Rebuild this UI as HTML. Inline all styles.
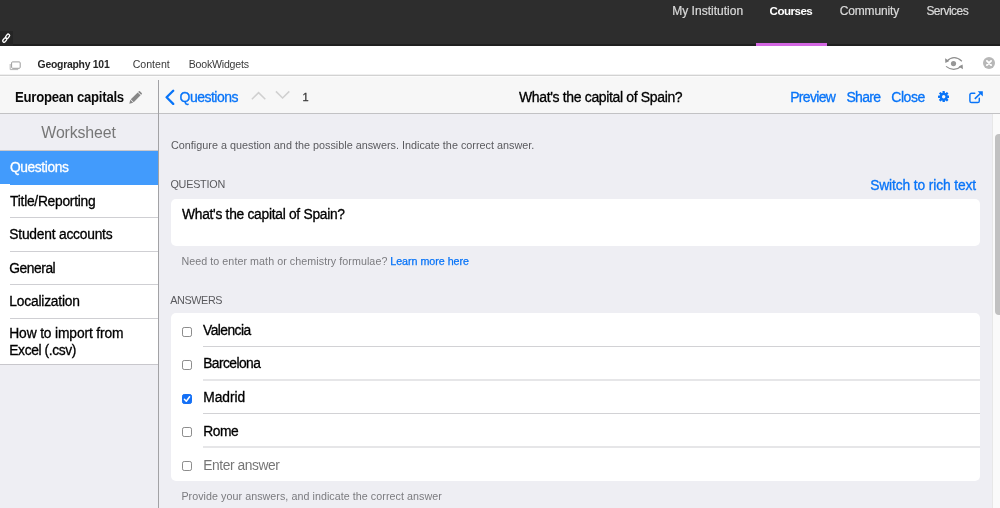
<!DOCTYPE html>
<html lang="en">
<head>
<meta charset="utf-8">
<title>BookWidgets – European capitals</title>
<style>
*{box-sizing:border-box;margin:0;padding:0}
html,body{width:1000px;height:508px;overflow:hidden;background:#eeeef3;font-family:"Liberation Sans",Arial,Helvetica,sans-serif}
.abs{position:absolute}
#page{will-change:transform;position:relative;width:1000px;height:508px;overflow:hidden;background:#eeeef3}
/* top dark bar */
#topbar{left:0;top:0;width:1000px;height:46px;background:#2d2d2d;border-bottom:2px solid #1f1f1f}
#topbar .nav{position:absolute;top:3.2px;font-size:12px;line-height:16px;color:#dadada;white-space:nowrap;-webkit-text-stroke:0.2px}
#topbar .nav.b{font-weight:bold;color:#fff;font-size:11.6px;-webkit-text-stroke:0}
#uline{left:756px;top:43.4px;width:70.6px;height:2.6px;background:#d467e3}
#linkbox{left:0;top:30.5px;width:13.3px;height:15.5px;background:#252525}
/* crumb bar */
#crumb{left:0;top:46px;width:1000px;height:30px;background:#fff;border-bottom:1px solid #d2d2d2;box-shadow:inset 0 -1px 0 #efefef}
#crumb .c{position:absolute;top:11.4px;font-size:10.6px;line-height:14px;color:#3a3a3a;white-space:nowrap}
#crumb .c.b{font-weight:bold;color:#262626;font-size:10.4px}
/* toolbar */
#tool{left:0;top:76px;width:1000px;height:38px;background:#f7f7f7;border-bottom:1px solid #c2c2c4;box-shadow:inset 0 1px 0 #fcfcfc}
#tool .t{position:absolute;white-space:nowrap;top:11.6px;font-size:14px;line-height:18px}
.blue{color:#0874f8;-webkit-text-stroke:0.3px #0874f8}
#vsep{left:158px;top:80px;width:1px;height:428px;background:#a2a2a5}
/* sidebar */
#side{left:0;top:114px;width:158px;height:394px;background:#eeeef3}
#side .hd{position:absolute;left:0;top:0;width:158px;height:37px;border-bottom:1px solid #c8c7cc;text-align:center;font-size:15.9px;line-height:38.4px;color:#777;padding-right:1px}
#side .list{position:absolute;left:0;top:37px;width:158px;background:#fff;border-bottom:1px solid #c8c7cc}
#side .it{position:relative;height:33.5px;padding-left:9.3px;font-size:13.8px;line-height:33px;color:#000;white-space:nowrap;-webkit-text-stroke:0.3px}
#side .it:after{content:"";position:absolute;left:10px;right:0;bottom:0;height:1px;background:#cfcfd3}
#side .it.sel{background:#429bfc;color:#fff}
#side .it.sel:after{background:#429bfc}
#side .it.sel:before{content:"";position:absolute;left:0;width:10px;bottom:0;height:1px;background:#fff}
#side .it.last{height:45.5px;line-height:17px;padding-top:6.2px;white-space:normal}
#side .it.last:after{display:none}
/* main */
.small{font-size:10.8px;line-height:14px;color:#5a5a5e;white-space:nowrap}
.box{background:#fff;border-radius:5px}
.row{position:absolute;left:0;width:809px;height:33.5px}
.row .cb{position:absolute;left:11.3px;top:13.5px;width:10px;height:10px;border:1px solid #8c8c8c;border-radius:2.2px;background:#fff}
.row .cb.on{background:#1470f6;border-color:#1470f6}
.row .tx{position:absolute;left:32.2px;top:0.7px;font-size:13.8px;line-height:33px;color:#000;white-space:nowrap;-webkit-text-stroke:0.3px}
.ln{position:absolute;left:32px;right:0;height:1px;background:#d2d2d5}
.ln.h{height:2px;background:#e6e6e8}
#scroll{left:992px;top:114px;width:8px;height:394px;background:#fafafa;border-left:1px solid #e7e7e7}
#thumb{left:995px;top:134px;width:9px;height:181px;background:#c1c1c1;border-radius:4px}
</style>
</head>
<body>
<div id="page">

<div id="topbar" class="abs">
  <span class="nav" style="left:672.2px;letter-spacing:0.02px">My Institution</span>
  <span class="nav b" style="left:769.6px;letter-spacing:-0.53px">Courses</span>
  <span class="nav" style="left:839.7px;letter-spacing:-0.14px">Community</span>
  <span class="nav" style="left:926.4px;letter-spacing:-0.53px">Services</span>
  <div id="uline" class="abs"></div>
  <div id="linkbox" class="abs">
    <svg width="13" height="15" viewBox="0 0 13 15"><g fill="none" stroke="#fff" stroke-width="1.35" transform="translate(6.15 7.2) rotate(-52)"><rect x="-4.75" y="-1.4" width="4.9" height="2.8" rx="1.4"/><rect x="-0.15" y="-1.4" width="4.9" height="2.8" rx="1.4"/></g></svg>
  </div>
</div>

<div id="crumb" class="abs">
  <svg class="abs" style="left:9px;top:14.6px" width="12" height="10" viewBox="0 0 12 10"><path d="M1.2 3v5.6h8" fill="none" stroke="#b5b5b5" stroke-width="1"/><rect x="2.6" y="0.9" width="8.6" height="6.4" rx="1" fill="#fff" stroke="#9c9c9c" stroke-width="1"/></svg>
  <span class="c b" style="left:37.6px;top:12.2px;letter-spacing:-0.25px">Geography 101</span>
  <span class="c" style="left:132.7px;letter-spacing:-0.01px">Content</span>
  <span class="c" style="left:188.7px;letter-spacing:-0.21px">BookWidgets</span>
  <svg class="abs" style="left:944px;top:9px" width="20" height="17" viewBox="0 0 20 17"><g fill="none" stroke="#8e8e8e" stroke-width="1.15"><path d="M2.9 6.1Q10 -0.9 17.9 6.2"/><path d="M17.2 11.2Q10 17.6 2 11.4"/></g><path d="M1.1 3.3l0.3 4.6 3.9-1.9z" fill="#8e8e8e"/><path d="M18.9 14.2l-0.3-4.6-3.9 1.9z" fill="#8e8e8e"/><circle cx="9.5" cy="8.6" r="2.6" fill="#979797"/></svg>
  <svg class="abs" style="left:983px;top:11px" width="12" height="12" viewBox="0 0 12 12"><circle cx="6" cy="6" r="6" fill="#b7b7b7"/><path d="M3.9 3.9l4.2 4.2M8.1 3.9l-4.2 4.2" stroke="#fff" stroke-width="1.9" stroke-linecap="round"/></svg>
</div>

<div id="tool" class="abs">
  <span class="t" style="left:14.5px;color:#0a0a0a;letter-spacing:-0.28px;font-weight:bold;-webkit-text-stroke:0;transform:scaleX(0.94);transform-origin:0 50%">European capitals</span>
  <svg class="abs" style="left:129px;top:14.6px" width="13" height="13" viewBox="0 0 13 13"><path d="M0.3 12.7l1-3.9 2.9 2.9z M1.8 8.3l6.9-6.9 2.9 2.9-6.9 6.9z M9.2 0.9l0.6-0.6a0.8 0.8 0 0 1 1.1 0l1.8 1.8a0.8 0.8 0 0 1 0 1.1l-0.6 0.6z" fill="#878787"/></svg>
  <svg class="abs" style="left:164px;top:13px" width="12" height="16" viewBox="0 0 12 16"><path d="M9.2 1.7L2.6 8.3l6.6 6.6" fill="none" stroke="#0874f8" stroke-width="2.3" stroke-linecap="round" stroke-linejoin="round"/></svg>
  <span class="t blue" style="left:179.6px;letter-spacing:-0.53px">Questions</span>
  <svg class="abs" style="left:251px;top:14.5px" width="15" height="10" viewBox="0 0 15 10"><path d="M0.9 8.2L7.6 1.6 14.3 8.2" fill="none" stroke="#d0d0d0" stroke-width="1.5"/></svg>
  <svg class="abs" style="left:275px;top:14.2px" width="15" height="10" viewBox="0 0 15 10"><path d="M0.9 1.4L7.6 8 14.3 1.4" fill="none" stroke="#d0d0d0" stroke-width="1.5"/></svg>
  <span class="t" style="left:302.4px;top:14.4px;font-size:11px;line-height:14px;color:#3a3a3a;-webkit-text-stroke:0.3px">1</span>
  <span class="t" style="left:519px;color:#000;-webkit-text-stroke:0.3px;letter-spacing:-0.35px">What's the capital of Spain?</span>
  <span class="t blue" style="left:790.2px;letter-spacing:-0.67px">Preview</span>
  <span class="t blue" style="left:846.5px;letter-spacing:-0.73px">Share</span>
  <span class="t blue" style="left:891.3px;letter-spacing:-0.47px">Close</span>
  <svg class="abs" style="left:937.6px;top:15.1px" width="11.4" height="11.4" viewBox="-6 -6 12 12"><g fill="#0874f8"><circle r="4.2"/><rect x="-1.25" y="-6" width="2.5" height="12" rx="0.5"/><rect x="-1.25" y="-6" width="2.5" height="12" rx="0.5" transform="rotate(45)"/><rect x="-1.25" y="-6" width="2.5" height="12" rx="0.5" transform="rotate(90)"/><rect x="-1.25" y="-6" width="2.5" height="12" rx="0.5" transform="rotate(135)"/></g><circle r="1.8" fill="#f7f7f7"/></svg>
  <svg class="abs" style="left:969px;top:14.6px" width="14" height="13" viewBox="0 0 14 13"><path d="M10.3 7.3v2.6a1.6 1.6 0 0 1-1.6 1.6H2.5A1.6 1.6 0 0 1 .9 9.9V3.8A1.6 1.6 0 0 1 2.5 2.2h3.3" fill="none" stroke="#0874f8" stroke-width="1.45" stroke-linecap="round"/><path d="M5.8 7.9L12.4 1.5" stroke="#0874f8" stroke-width="1.6" fill="none"/><path d="M8.7 0.3h5.1v5.1z" fill="#0874f8"/></svg>
</div>

<div id="side" class="abs">
  <div class="hd" style="letter-spacing:-0.15px">Worksheet</div>
  <div class="list">
    <div class="it sel" style="letter-spacing:-0.39px;padding-left:9.9px">Questions</div>
    <div class="it" style="letter-spacing:-0.26px;padding-left:10.1px">Title/Reporting</div>
    <div class="it" style="letter-spacing:-0.22px">Student accounts</div>
    <div class="it" style="letter-spacing:-0.45px">General</div>
    <div class="it" style="letter-spacing:-0.20px">Localization</div>
    <div class="it last" style="letter-spacing:-0.14px">How to import from<br><span style="letter-spacing:-0.38px">Excel (.csv)</span></div>
  </div>
</div>
<div id="vsep" class="abs"></div>

<div id="main">
  <span class="abs small" style="letter-spacing:0.01px;left:171px;top:137.5px">Configure a question and the possible answers. Indicate the correct answer.</span>
  <span class="abs small" style="left:170.4px;top:177px;letter-spacing:-0.22px">QUESTION</span>
  <span class="abs blue" style="letter-spacing:-0.12px;left:870.2px;top:176.6px;font-size:13.8px;line-height:18px;white-space:nowrap">Switch to rich text</span>
  <div class="abs box" style="left:171px;top:199px;width:809px;height:47px">
    <span class="abs" style="left:11px;top:7.2px;font-size:13.8px;line-height:18px;color:#000;-webkit-text-stroke:0.3px;white-space:nowrap;letter-spacing:-0.28px">What's the capital of Spain?</span>
  </div>
  <span class="abs small" style="left:181.4px;top:253.6px;color:#7b7b7f;font-size:10.7px;letter-spacing:0.07px">Need to enter math or chemistry formulae? <span class="blue" style="letter-spacing:-0.02px;-webkit-text-stroke:0.25px #0874f8;margin-left:-0.2px">Learn more here</span></span>
  <span class="abs small" style="left:170.2px;top:293.3px;letter-spacing:-0.38px">ANSWERS</span>
  <div class="abs box" style="left:171px;top:313px;width:809px;height:168px">
    <div class="row" style="top:0"><span class="cb"></span><span class="tx" style="letter-spacing:-0.53px;left:32px">Valencia</span></div>
    <div class="row" style="top:33.5px"><span class="cb"></span><span class="tx" style="letter-spacing:-0.56px">Barcelona</span></div>
    <div class="row" style="top:67px"><span class="cb on"><svg class="abs" style="left:-1px;top:-1px" width="10" height="10" viewBox="0 0 10 10"><path d="M2.4 5.3l1.9 2 3.3-4.5" fill="none" stroke="#fff" stroke-width="1.5" stroke-linecap="round" stroke-linejoin="round"/></svg></span><span class="tx" style="letter-spacing:-0.02px">Madrid</span></div>
    <div class="row" style="top:100.5px"><span class="cb"></span><span class="tx" style="letter-spacing:-0.43px;top:1.7px">Rome</span></div>
    <div class="ln" style="top:33px"></div><div class="ln h" style="top:66px"></div><div class="ln" style="top:100px"></div><div class="ln h" style="top:133px"></div>
    <div class="row" style="top:134px"><span class="cb"></span><span class="tx" style="color:#767676;letter-spacing:-0.42px;top:1.7px;-webkit-text-stroke:0">Enter answer</span></div>
  </div>
  <span class="abs small" style="left:181.4px;top:489.2px;color:#7b7b7f;font-size:10.7px;letter-spacing:0.06px">Provide your answers, and indicate the correct answer</span>
</div>

<div id="scroll" class="abs"></div>
<div id="thumb" class="abs"></div>

</div>
</body>
</html>
